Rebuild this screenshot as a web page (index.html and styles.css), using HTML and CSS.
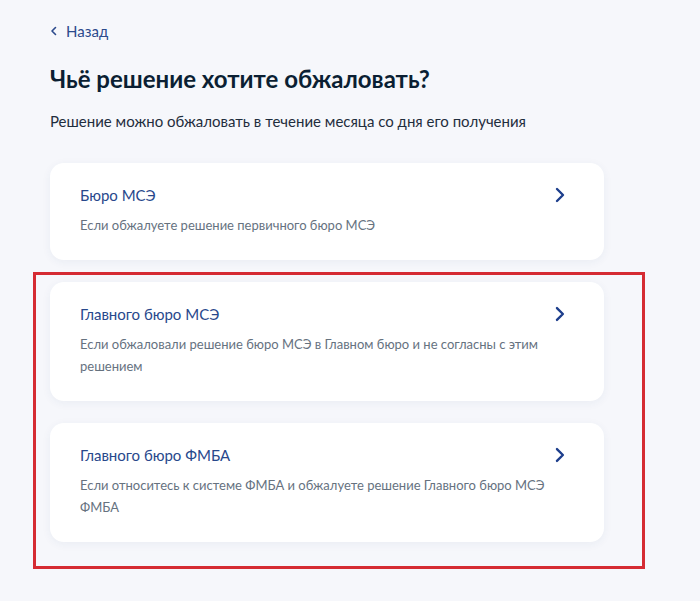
FILE: index.html
```html
<!DOCTYPE html>
<html>
<head>
<meta charset="utf-8">
<title>Обжалование решения</title>
<link rel="stylesheet" href="styles.css">
</head>
<body>
    <div class="page">
        <a class="back" href="#">
            <svg class="back-icon" width="8" height="10" viewBox="0 0 8 10"><path d="M5.5 1.5 2 5l3.5 3.5" fill="none" stroke="currentColor" stroke-width="1.6" stroke-linecap="round" stroke-linejoin="round"/></svg>
            Назад
        </a>
        <h1 class="title">Чьё решение хотите обжаловать?</h1>
        <p class="lead">Решение можно обжаловать в течение месяца со дня его получения</p>

        <a class="card" href="#">
            <div class="card-text">
                <div class="card-title">Бюро МСЭ</div>
                <div class="card-desc">Если обжалуете решение первичного бюро МСЭ</div>
            </div>
            <svg class="chevron" width="12" height="16" viewBox="0 0 12 16"><path d="M3 2l6 6-6 6" fill="none" stroke="currentColor" stroke-width="2.4" stroke-linecap="round" stroke-linejoin="round"/></svg>
        </a>

        <div class="highlight">
            <a class="card" href="#">
                <div class="card-text">
                    <div class="card-title">Главного бюро МСЭ</div>
                    <div class="card-desc">Если обжаловали решение бюро МСЭ в Главном бюро и не согласны с этим решением</div>
                </div>
                <svg class="chevron" width="12" height="16" viewBox="0 0 12 16"><path d="M3 2l6 6-6 6" fill="none" stroke="currentColor" stroke-width="2.4" stroke-linecap="round" stroke-linejoin="round"/></svg>
            </a>
            <a class="card" href="#">
                <div class="card-text">
                    <div class="card-title">Главного бюро ФМБА</div>
                    <div class="card-desc">Если относитесь к системе ФМБА и обжалуете решение Главного бюро МСЭ ФМБА</div>
                </div>
                <svg class="chevron" width="12" height="16" viewBox="0 0 12 16"><path d="M3 2l6 6-6 6" fill="none" stroke="currentColor" stroke-width="2.4" stroke-linecap="round" stroke-linejoin="round"/></svg>
            </a>
        </div>
    </div>
</body>
</html>
```

FILE: styles.css
```css
body {
    margin: 0;
    background-color: #f6f7fb;
    font-family: Lato, "Noto Sans", sans-serif;
    color: #0b1f33;
}
.page {
    width: 554px;
    padding: 21px 0 30px 50px;
}
.back {
    display: flex;
    align-items: center;
    gap: 8px;
    font-size: 15px;
    line-height: 20px;
    color: #2c4a8c;
    text-decoration: none;
}
.back-icon {
    color: #2c4a8c;
}
.title {
    margin: 23px 0 0;
    font-size: 24px;
    line-height: 30px;
    font-weight: 700;
}
.lead {
    margin: 16px 0 0;
    font-size: 15px;
    line-height: 22px;
    color: #1f2d3d;
}
.card {
    display: flex;
    justify-content: space-between;
    align-items: flex-start;
    margin-top: 31px;
    padding: 22px 38px 24px 30px;
    background-color: #fff;
    border-radius: 14px;
    box-shadow: 0 2px 10px rgba(30, 60, 120, 0.06);
    text-decoration: none;
}
.card-title {
    font-size: 15px;
    line-height: 20px;
    color: #28488c;
}
.card-desc {
    max-width: 480px;
    margin-top: 9px;
    font-size: 13px;
    line-height: 22px;
    color: #66727f;
}
.chevron {
    margin-top: 2px;
    color: #1d3e8c;
}
.highlight {
    display: flex;
    flex-direction: column;
    gap: 22px;
    width: 554px;
    margin: 12px 0 0 -17px;
    padding: 7px 38px 24px 14px;
    border: 3px solid #d52b33;
}
.highlight .card {
    margin-top: 0;
}
```
